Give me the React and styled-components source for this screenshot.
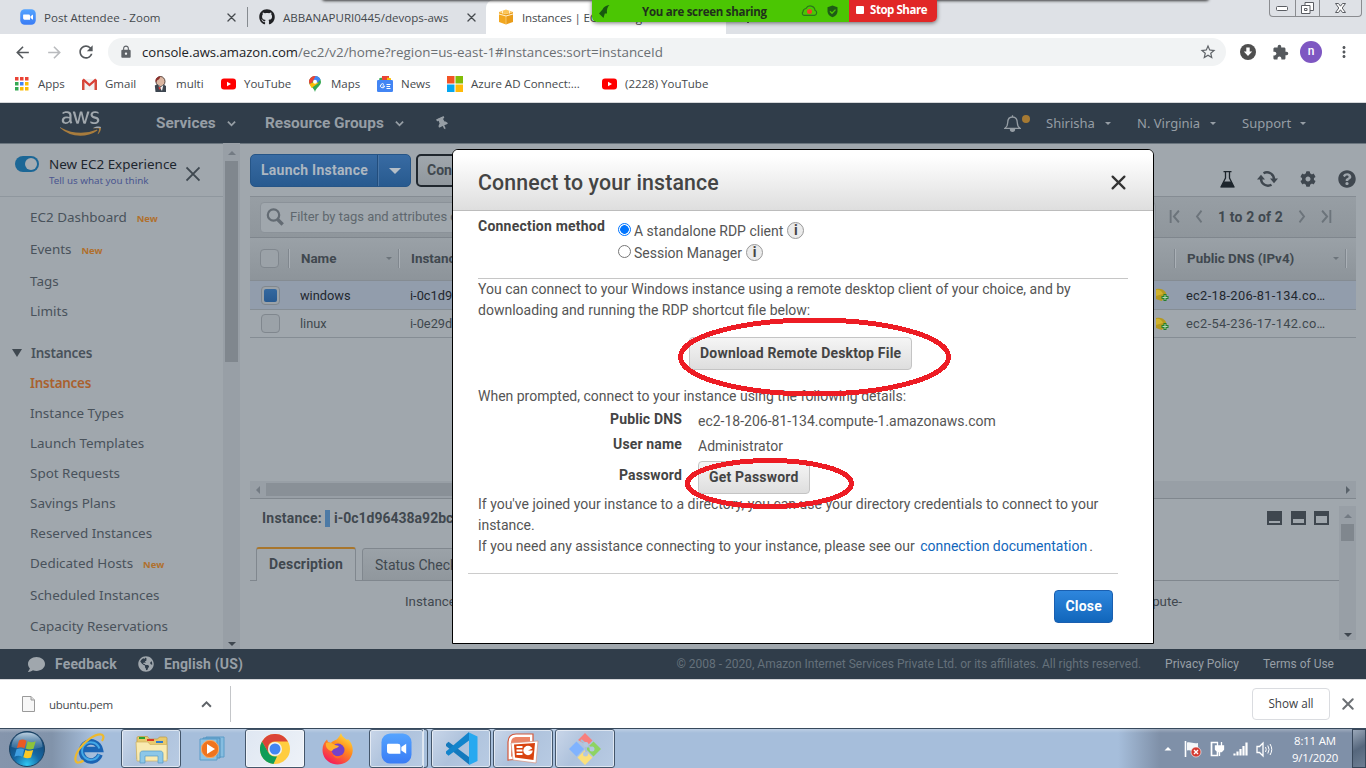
import React from "react";
import styled, { createGlobalStyle, css } from "styled-components";
import { FaAws, FaGithub, FaThumbtack, FaCog, FaQuestionCircle, FaComment, FaGlobeAmericas } from "react-icons/fa";
import { MdArrowBack, MdArrowForward, MdRefresh, MdLock, MdStarBorder, MdExtension, MdMoreVert } from "react-icons/md";

const ui = `"Open Sans", "Noto Sans", sans-serif`;
const ember = `"Noto Sans", "Open Sans", sans-serif`;
const roboto = `Roboto, "Liberation Sans", sans-serif`;

const GlobalStyle = createGlobalStyle`
  * { box-sizing: border-box; }
  html, body { margin: 0; padding: 0; overflow: hidden; }
  svg { display: block; flex: none; }
`;

const Screen = styled.div`
  position: relative;
  width: 1366px;
  height: 768px;
  display: flex;
  flex-direction: column;
  overflow: hidden;
  background: #fff;
  font-family: ${ui};
`;

/* text runs */
const Text = styled.span`
  white-space: nowrap;
  letter-spacing: ${(p) => p.$track || "inherit"};
`;

/* ---------- browser chrome ---------- */
const TabStrip = styled.div`
  flex: none;
  display: flex;
  height: 34px;
  background: #dee1e6;
`;
const Tab = styled.div`
  flex: none;
  display: flex;
  align-items: center;
  width: ${(p) => p.$width}px;
  padding-left: ${(p) => p.$pad}px;
  gap: 8px;
  font-size: 11.55px;
  letter-spacing: ${(p) => (p.$active ? "-0.15px" : "0")};
  color: #45494d;
  background: ${(p) => (p.$active ? "#fff" : "transparent")};
  border-radius: ${(p) => (p.$active ? "8px 8px 0 0" : "0")};
  ${(p) => p.$divider && css`
    background: linear-gradient(#868b90, #868b90) right center / 1px 20px no-repeat;
  `}
`;
const TabTitle = styled.span`
  flex: none;
  width: ${(p) => p.$width}px;
  white-space: nowrap;
`;
const NewTab = styled.div`
  display: flex;
  align-items: center;
  width: 44px;
  padding-left: 16px;
`;
const WindowButtons = styled.div`
  display: flex;
  margin-left: auto;
  margin-right: 4px;
  width: 93px;
  height: 17px;
  border: 1px solid #8a8c90;
  border-top: 0;
  border-radius: 0 0 4px 4px;
`;
const WindowButton = styled.div`
  display: flex;
  align-items: center;
  justify-content: center;
  width: ${(p) => p.$width}px;
  border-left: ${(p) => (p.$first ? "0" : "1px solid #8a8c90")};
`;
const TopShadow = styled.div`
  position: absolute;
  top: -6px;
  left: 322px;
  width: 887px;
  height: 6px;
  border-radius: 5px;
  box-shadow: 0 1px 3px rgba(0, 0, 0, 0.75);
`;
const ShareBanner = styled.div`
  position: absolute;
  left: 592px;
  top: 0;
  display: flex;
  height: 22px;
  border-radius: 0 0 5px 5px;
  overflow: hidden;
  box-shadow: 0 1px 4px rgba(0, 0, 0, 0.55);
`;
const Sharing = styled.div`
  display: flex;
  align-items: center;
  width: 257px;
  padding-left: 7px;
  background: #4bc603;
  color: #20301c;
  font-weight: 700;
  font-size: 11.5px;
  letter-spacing: -0.27px;
`;
const StopShare = styled.div`
  display: flex;
  align-items: center;
  width: 88px;
  padding: 0 0 3px 7px;
  gap: 6px;
  background: #e12727;
  color: #fff;
  font-weight: 700;
  font-size: 11.5px;
  letter-spacing: -0.45px;
`;
const Square = styled.i`
  width: 8px;
  height: 8px;
  border-radius: 1px;
  background: #fff;
`;
const Toolbar = styled.div`
  flex: none;
  display: flex;
  align-items: center;
  height: 36px;
  padding-left: 13px;
  color: #5f6368;
`;
const NavIcon = styled.div`
  display: flex;
  justify-content: center;
  width: ${(p) => p.$width || 32}px;
  color: ${(p) => p.$color || "#55595d"};
`;
const Omnibox = styled.div`
  display: flex;
  align-items: center;
  width: 1118px;
  height: 28px;
  padding: 0 9px 0 11px;
  margin: 0 10px 0 0;
  border-radius: 14px;
  background: #f1f3f4;
  font-size: 13.1px;
  color: #6b6f73;
`;
const Host = styled.b`
  font-weight: 400;
  color: #202124;
  margin-left: 9px;
`;
const Path = styled.span`
  font-size: 13.4px;
  flex: 1;
`;
const Avatar = styled.div`
  width: 22px;
  height: 22px;
  border-radius: 50%;
  background: #7e57c2;
  color: #fff;
  font: 500 12px/21px ${roboto};
  text-align: center;
`;
const Bookmarks = styled.div`
  flex: none;
  display: flex;
  align-items: center;
  height: 33px;
  padding: 0 0 5px 14px;
  border-bottom: 1px solid #d5d7da;
  font-size: 11.5px;
  color: #45494d;
`;
const Bookmark = styled.div`
  display: flex;
  align-items: center;
  width: ${(p) => p.$width}px;
  gap: 8px;
  white-space: nowrap;
`;
const IconSlot = styled.span`
  display: flex;
  justify-content: center;
  width: 16px;
  flex: none;
`;

/* ---------- console navigation ---------- */
const ConsoleNav = styled.div`
  flex: none;
  display: flex;
  align-items: center;
  height: 40px;
  padding-left: 60px;
  background: #303d4a;
  color: #969ea5;
  font: 700 15.4px ${roboto};
`;
const AwsLogo = styled.div`
  display: grid;
  width: 96px;
  > svg { grid-area: 1 / 1; }
  > svg:first-child { color: #a0a7ad; clip-path: inset(0 0 38% 0); }
  > svg:last-child { color: #a87c3d; clip-path: inset(62% 0 0 0); }
`;
const NavItem = styled.div`
  display: flex;
  align-items: center;
  justify-content: ${(p) => (p.$spread ? "space-between" : "flex-start")};
  width: ${(p) => p.$width}px;
  margin-right: ${(p) => p.$after || 0}px;
  white-space: nowrap;
  ${(p) => p.$light && css`font: 400 13px ${ember};`}
`;
const Pin = styled(FaThumbtack)`
  transform: rotate(-25deg);
`;
const Dot = styled.i`
  width: 8px;
  height: 8px;
  border-radius: 50%;
  margin: -8px 16px 0 1px;
  background: #a67a33;
`;

/* ---------- console body ---------- */
const Console = styled.div`
  flex: none;
  display: flex;
  height: 506px;
  background: #a0a7ad;
  box-shadow: inset 0 1px #6a757e;
`;
const Sidebar = styled.div`
  width: 223px;
  font-family: ${ember};
  color: #49525b;
`;
const Experience = styled.div`
  display: flex;
  height: 54px;
  padding: 13px 0 0 15px;
  margin-bottom: 4px;
  border-bottom: 1px solid #8f979e;
`;
const Toggle = styled.div`
  display: flex;
  justify-content: flex-end;
  width: 24px;
  height: 16px;
  padding: 2px 2px;
  border-radius: 8px;
  background: #1c6796;
  &::after {
    content: "";
    width: 12px;
    height: 12px;
    border-radius: 50%;
    background: #a5acb2;
  }
`;
const ExperienceText = styled.div`
  display: flex;
  flex-direction: column;
  width: 128px;
  margin: -2px 8px 0 10px;
  font-size: 13.43px;
  line-height: 20px;
  color: #1d262e;
  small { font-size: 9.8px; line-height: 13px; color: #4a5690; white-space: nowrap; }
`;
const SideItem = styled.div`
  display: flex;
  align-items: center;
  height: ${(p) => p.$height}px;
  margin-top: ${(p) => (p.$head ? 11 : 0)}px;
  padding-left: ${(p) => (p.$head ? 12 : 30)}px;
  font-size: 13.45px;
  font-weight: ${(p) => (p.$strong ? 600 : 400)};
  letter-spacing: ${(p) => (p.$strong ? "-0.25px" : "0")};
  color: ${(p) => (p.$current ? "#a9612f" : "inherit")};
`;
const NewTag = styled.em`
  margin: 3px 0 0 10px;
  font: 700 9.4px ${ember};
  color: #b0702d;
`;
const ScrollColumn = styled.div`
  display: flex;
  flex-direction: column;
  align-items: center;
  width: 17px;
  height: ${(p) => p.$height || "auto"};
  margin-top: ${(p) => p.$offset || 0}px;
  padding: 8px 0 3px;
  background: #989fa6;
`;
const Arrow = styled.i`
  width: 0;
  height: 0;
  border: ${(p) => p.$s || 4}px solid transparent;
  ${(p) => p.$dir === "up" && css`border-top: 0; border-bottom-color: ${p.$c};`}
  ${(p) => p.$dir === "down" && css`border-bottom: 0; border-top-color: ${p.$c};`}
  ${(p) => p.$dir === "left" && css`border-left: 0; border-right-color: ${p.$c};`}
  ${(p) => p.$dir === "right" && css`border-right: 0; border-left-color: ${p.$c};`}
`;
const Thumb = styled.div`
  width: 13px;
  height: ${(p) => p.$height}px;
  margin: 6px 0 auto;
  background: #80878e;
`;
const Main = styled.div`
  display: flex;
  flex-direction: column;
  width: 1106px;
  margin-left: 10px;
  font-family: ${roboto};
  color: #40484f;
`;
const Actions = styled.div`
  display: flex;
  align-items: flex-start;
  height: 53px;
  padding-top: 11px;
`;
const LaunchButton = styled.div`
  display: flex;
  width: 161px;
  height: 33px;
  border: 1px solid #265587;
  border-radius: 5px;
  background: linear-gradient(#386ba3, #285a8f);
  color: #adb7c1;
  font: 700 14px/31px ${roboto};
  letter-spacing: 0.24px;
`;
const LaunchLabel = styled.span`
  width: 127px;
  padding-left: 10px;
  border-right: 1px solid #224d7c;
`;
const LaunchMore = styled.span`
  flex: 1;
  display: flex;
  align-items: center;
  justify-content: center;
  border-left: 1px solid #4a76a6;
`;
const ConnectButton = styled.div`
  width: 92px;
  height: 33px;
  margin-left: 5px;
  padding-left: 9px;
  border: 2px solid #20272e;
  border-radius: 5px;
  background: linear-gradient(#a0a7ad, #90979d);
  font: 700 14px/29px ${roboto};
`;
const ActionIcons = styled.div`
  display: flex;
  align-items: center;
  margin-left: auto;
  height: 50px;
  gap: 22px;
`;
const FilterBar = styled.div`
  display: flex;
  align-items: center;
  height: 41px;
  padding-left: 10px;
  border-top: 1px solid #858c93;
  background: linear-gradient(#979ea4, #8f969c);
`;
const FilterInput = styled.div`
  display: flex;
  align-items: center;
  width: 896px;
  height: 31px;
  padding: 0 6px 1px 5px;
  border: 1px solid #8b9299;
  border-radius: 4px;
  background: #a0a7ad;
  font-size: 13px;
  letter-spacing: -0.02px;
  color: #5f676e;
  gap: 6px;
`;
const Pager = styled.div`
  display: flex;
  align-items: center;
  width: 163px;
  margin: 0 0 1px 13px;
  justify-content: space-between;
  font: 700 14px ${roboto};
  letter-spacing: 0.15px;
`;
const Cells = styled.div`
  display: grid;
  grid-template-columns: 39px 110px 746px 30px 171px 1fr;
  align-items: center;
`;
const HeadRow = styled(Cells)`
  height: 44px;
  padding-bottom: 1px;
  border-top: 1px solid #7f868d;
  border-bottom: 1px solid #858c93;
  background: linear-gradient(#9aa1a7, #8d949a);
  font-weight: 700;
  font-size: 13.4px;
`;
const HeadCell = styled.div`
  display: flex;
  align-items: center;
  justify-content: space-between;
  height: 19px;
  padding: 0 7px 0 11px;
  border-left: 1px solid #aab0b6;
  box-shadow: -1px 0 #80878e;
`;
const Row = styled(Cells)`
  height: ${(p) => (p.$selected ? 29 : 28)}px;
  border-bottom: 1px solid #858d94;
  background: ${(p) => (p.$selected ? "#929dac" : "transparent")};
  color: ${(p) => (p.$selected ? "#1f272e" : "#3f474e")};
  font-size: 12.8px;
`;
const Cell = styled.div`
  padding-left: 11px;
  white-space: nowrap;
  letter-spacing: ${(p) => p.$track || 0}px;
`;
const Check = styled.div`
  width: 19px;
  height: 19px;
  margin-left: ${(p) => p.$inset}px;
  padding: 2px;
  border: 1px solid #80878e;
  border-radius: 4px;
  background: #9ba2a8;
  &::after {
    content: "";
    display: ${(p) => (p.$on ? "block" : "none")};
    height: 13px;
    border-radius: 2px;
    background: linear-gradient(#34689f, #285a91);
  }
`;
const HScroll = styled.div`
  display: flex;
  align-items: center;
  height: 18px;
  margin-top: auto;
  padding: 0 6px;
  background: #989fa6;
  border-bottom: 1px solid #80878e;
`;
const HThumb = styled.div`
  width: 520px;
  height: 13px;
  margin: 0 auto 0 6px;
  background: #899097;
`;
const Detail = styled.div`
  display: flex;
  height: 150px;
`;
const DetailMain = styled.div`
  width: 1089px;
`;
const DetailHead = styled.div`
  display: flex;
  align-items: center;
  height: 38px;
  padding: 0 10px 0 12px;
  font-weight: 700;
  font-size: 14px;
`;
const Flag = styled.i`
  width: 5px;
  height: 17px;
  margin: 0 4px 0 3px;
  background: #4c7aa6;
`;
const PaneIcons = styled.div`
  display: flex;
  gap: 8.5px;
  margin-left: auto;
`;
const PaneIcon = styled.i`
  width: 15px;
  height: 14px;
  border: 2px solid #3f474f;
  border-top-width: ${(p) => p.$top}px;
`;
const DetailTabs = styled.div`
  display: flex;
  align-items: flex-end;
  height: 44px;
  padding-left: 6px;
  background: linear-gradient(#80878e, #80878e) bottom / 100% 1px no-repeat;
`;
const DetailTab = styled.div`
  width: ${(p) => p.$width}px;
  height: ${(p) => (p.$active ? 34 : 33)}px;
  margin-right: 6px;
  padding-left: 12px;
  border: 1px solid #80878e;
  border-radius: 3px 3px 0 0;
  line-height: 32px;
  font-size: 14px;
  background: linear-gradient(#9ba2a8, #90979d);
  ${(p) => p.$active && css`
    border-top: 2px solid #a8762d;
    border-bottom: 0;
    background: #a0a7ad;
    font-weight: 700;
    line-height: 31px;
    letter-spacing: 0.18px;
  `}
`;
const DetailBody = styled.div`
  display: flex;
  justify-content: space-between;
  padding: 13px 157px 0 155px;
  font-size: 13.3px;
`;

/* ---------- dialog ---------- */
const Dialog = styled.div`
  position: absolute;
  left: 452px;
  top: 149px;
  width: 702px;
  height: 495px;
  border: 1px solid #000;
  border-radius: 6px 6px 0 0;
  overflow: hidden;
  background: #fff;
  font: 400 14px/21px ${roboto};
  color: #555;
`;
const DialogHead = styled.div`
  display: flex;
  align-items: center;
  justify-content: space-between;
  height: 61px;
  padding: 5px 27px 0 25px;
  border-bottom: 1px solid #bcbcbc;
  background: linear-gradient(#fff 10%, #dedede);
  font-weight: 500;
  font-size: 21.3px;
  letter-spacing: 0.16px;
  color: #444;
`;
const Method = styled.div`
  display: flex;
  margin: 0 25px;
  height: 68px;
  border-bottom: 1px solid #c6c6c6;
`;
const MethodLabel = styled.div`
  width: 139px;
  padding-top: 5px;
  font-weight: 700;
  letter-spacing: 0.22px;
  color: #444;
`;
const Options = styled.div`
  padding-top: 9px;
`;
const Option = styled.div`
  display: flex;
  align-items: center;
  height: 22px;
  gap: 4px;
`;
const Radio = styled.i`
  width: 13px;
  height: 13px;
  margin: 0 -1px 3px 1px;
  border: 1px solid ${(p) => (p.$on ? "#0075ff" : "#767676")};
  border-radius: 50%;
  background: ${(p) => (p.$on ? "radial-gradient(circle, #0075ff 4px, #fff 4.6px)" : "#fff")};
`;
const Info = styled.i`
  width: 17px;
  height: 17px;
  margin-bottom: 1px;
  border: 1px solid #999;
  border-radius: 50%;
  background: #ebebeb;
  font: 700 14px/15px ${roboto};
  text-align: center;
  color: #444;
`;
const Copy = styled.p`
  margin: 0 25px;
  padding-right: ${(p) => p.$right || 0}px;
`;
const Button = styled.span`
  display: inline-block;
  height: 33px;
  padding: 0 10px;
  border: 1px solid ${(p) => (p.$primary ? "#1a5fb0" : "#c4c4c4")};
  border-radius: 4px;
  background: ${(p) => (p.$primary ? "linear-gradient(#2e86dd, #1166bb)" : "linear-gradient(#f5f5f5, #dedede)")};
  color: ${(p) => (p.$primary ? "#fff" : "#444")};
  font-weight: 700;
  line-height: 31px;
  letter-spacing: 0.2px;
  white-space: nowrap;
`;
const Download = styled.div`
  height: 65px;
  padding: 16px 0 0 236px;
`;
const Field = styled.div`
  display: flex;
  height: ${(p) => p.$height}px;
`;
const FieldLabel = styled.div`
  width: 229px;
  margin-right: 16px;
  padding-top: ${(p) => p.$top}px;
  text-align: right;
  font-weight: 700;
  letter-spacing: 0.15px;
  color: #444;
`;
const FieldValue = styled.div`
  padding-top: 4px;
`;
const DocLink = styled.span`
  margin: 0 2px;
  color: #1166bb;
`;
const DialogFoot = styled.div`
  display: flex;
  justify-content: flex-end;
  margin: 16px 35px 0 15px;
  padding: 16px 5px 0 0;
  border-top: 1px solid #ccc;
`;
const Marks = styled.svg`
  position: absolute;
  left: 670px;
  top: 310px;
`;

/* ---------- footer, downloads ---------- */
const Footer = styled.div`
  flex: none;
  display: flex;
  align-items: center;
  height: 30px;
  padding: 0 32px 0 28px;
  background: #303d4a;
  color: #979fa6;
  font: 400 12px ${roboto};
  white-space: nowrap;
  b { font-size: 14px; letter-spacing: 0.15px; margin: 0 21px 1px 10px; }
  small { font-size: 12px; margin-left: auto; color: #65717b; }
  span { margin-left: 24px; }
`;
const Downloads = styled.div`
  flex: none;
  display: flex;
  align-items: center;
  height: 49px;
  padding: 0 12px 0 0;
  border-top: 1px solid #d5d7da;
  font-size: 11.5px;
  color: #45494d;
`;
const DownloadItem = styled.div`
  display: flex;
  align-items: center;
  justify-content: space-between;
  width: 231px;
  height: 36px;
  padding: 0 18px 0 22px;
  border-right: 1px solid #c4c6c9;
`;
const FileName = styled.div`
  display: flex;
  align-items: center;
  gap: 14px;
`;
const ShowAll = styled.div`
  width: 78px;
  height: 32px;
  margin: 0 12px 0 auto;
  border: 1px solid #dadce0;
  border-radius: 4px;
  text-align: center;
  line-height: 29px;
  font-size: 11.7px;
  color: #3c4043;
`;

/* ---------- task bar ---------- */
const Taskbar = styled.div`
  flex: none;
  display: flex;
  height: 40px;
  border-top: 1px solid #37495c;
  background:
    linear-gradient(rgba(255, 255, 255, 0.25), transparent 4px),
    linear-gradient(90deg, #8595ac 0, #8193aa 52px, #a6bedb 92px, #a6bedb 1118px, #7f90a8 1160px);
`;
const TaskSlot = styled.div`
  display: flex;
  align-items: center;
  justify-content: center;
  width: ${(p) => p.$width || 60}px;
  height: 39px;
  margin-right: ${(p) => p.$after ?? 2}px;
  ${(p) => p.$open && css`
    border: 1px solid #44566b;
    border-radius: 3px;
    background: linear-gradient(125deg, ${p.$front ? "#dfe7f2, #eef2f8" : "#c9d6e9, #aec2dc 45%, #b8cbe3"});
    box-shadow: inset 0 0 0 1px rgba(255, 255, 255, 0.55);
  `}
`;
const Stacked = styled.i`
  width: 5px;
  height: 39px;
  margin: 0 3px 0 -1px;
  border: 1px solid #44566b;
  border-left-color: #dfe8f3;
  border-radius: 0 3px 3px 0;
`;
const Tray = styled.div`
  display: flex;
  align-items: center;
  margin-left: auto;
  color: #fff;
`;
const Clock = styled.div`
  width: 66px;
  margin: 0 4px 0 9px;
  text-align: center;
  font-size: 11.4px;
  line-height: 17px;
  letter-spacing: -0.15px;
`;
const PeekButton = styled.div`
  width: 14px;
  height: 39px;
  border: 1px solid #38475a;
  background: linear-gradient(150deg, #9aa7b8, #56677d 50%, #6d7e93);
`;

/* ---------- drawings ---------- */
const ZoomLogo = ({ s }) => (
  <svg width={s} height={s} viewBox="0 0 32 32">
    <defs><linearGradient id="zm" x2="0" y2="1"><stop stopColor="#55a4ff" /><stop offset="1" stopColor="#3a7cf5" /></linearGradient></defs>
    <rect x="0.5" y="0.5" width="31" height="31" rx="9" fill="url(#zm)" />
    <path d="M7 11h10.500a2.500 2.500 0 0 1 2.500 2.500V21.500H9a2.800 2.800 0 0 1-2.800-2.800V12zM21 14.500l5-3.500v10.500l-5-3.500z" fill="#fff" />
  </svg>
);
const Cube = () => (
  <svg width="16" height="16" viewBox="0 0 16 16">
    <path d="M1 3v10l7 2.500V5z" fill="#f2a71f" /><path d="M15 3v10l-7 2.500V5z" fill="#e99c19" />
    <path d="M1 3l7-2.500L15 3 8 5z" fill="#fbc457" />
    <path d="M1 5l7 2 7-2M4.500 2v2.500M11.500 2v2.500" fill="none" stroke="#fff0cf" strokeWidth="1" />
    <path d="M8 6v9" stroke="#fbdc9c" strokeWidth=".6" />
  </svg>
);
const AppsGrid = () => (
  <svg width="14" height="14" viewBox="0 0 14 14">
    {["#ea4335", "#ea4335", "#ea4335", "#34a853", "#4285f4", "#fbbc04", "#34a853", "#fbbc04", "#fbbc04"].map((c, i) => (
      <rect key={i} x={(i % 3) * 5} y={Math.floor(i / 3) * 5} width="3.500" height="3.500" fill={c} />
    ))}
  </svg>
);
const Gmail = () => (
  <svg width="15" height="12" viewBox="0 0 15 12">
    <path d="M1 1h13v11H1z" fill="#f2f2f2" /><path d="M0 1.500V12h2.500V3zM15 1.500V12h-2.500V3z" fill="#d54b3d" />
    <path d="M1 1.300l6.500 5.700L14 1.300" fill="none" stroke="#d93f35" strokeWidth="2.200" />
  </svg>
);
const Jenkins = () => (
  <svg width="13" height="16" viewBox="0 0 13 16">
    <ellipse cx="6.500" cy="5.500" rx="4.500" ry="5" fill="#dcb7a2" stroke="#4b3b36" strokeWidth=".9" />
    <path d="M1.800 6.500C.5 2 4 .3 7 .5c-2 1.500-1 3-3.500 3.500z" fill="#8c2f2b" /><path d="M.8 9.500c1.500-1 3-1 3-1L6.500 11l3-2.500 2.500 1.500v6H1.500z" fill="#3d4650" />
    <path d="M4 9l2.500 2.500L9.300 9 8 15z" fill="#f5f5f5" /><path d="M4.500 10.500l2.500 1.500-2 2z" fill="#d33833" />
  </svg>
);
const YouTube = () => (
  <svg width="15" height="12" viewBox="0 0 15 12"><rect y=".5" width="15" height="11" rx="3" fill="#f00" /><path d="M6 3.700v4.600L10 6z" fill="#fff" /></svg>
);
const MapsPin = () => (
  <svg width="12" height="16" viewBox="0 0 12 16">
    <path d="M6 0a6 6 0 0 1 6 6c0 4-4.800 5-6 10C4.800 11 0 10 0 6a6 6 0 0 1 6-6z" fill="#34a853" />
    <path d="M1.300 2.200A6 6 0 0 1 7.500.2L1.500 8.800A5 5 0 0 1 1.300 2.200z" fill="#ea4335" />
    <path d="M7.500 5l2 2L2.500 12 .5 8z" fill="#fbbc04" /><path d="M6.500 0a6 6 0 0 1 5 3.500L8 7 4.500 4z" fill="#4285f4" />
    <circle cx="6" cy="5.800" r="2" fill="#fff" />
  </svg>
);
const News = () => (
  <svg width="16" height="16" viewBox="0 0 16 16">
    <path d="M2.500 2l9-1 .5 4H2z" fill="#34a853" /><path d="M5 0h7v4H5z" fill="#ea4335" /><path d="M10 1.500l4 .8V6h-4z" fill="#fbbc04" />
    <rect y="4" width="16" height="12" rx="1.300" fill="#4285f4" />
    <path d="M7.500 10H5.500M7 8.500a2 2 0 1 0 .5 1.500M9.500 8.500h4M9.500 10.500h3.500M9.500 12.500h4" fill="none" stroke="#fff" strokeWidth="1" />
  </svg>
);
const Microsoft = () => (
  <svg width="16" height="16" viewBox="0 0 16 16">
    <path d="M0 0h7.500v7.500H0z" fill="#f35325" /><path d="M8.500 0H16v7.500H8.500z" fill="#81bc06" />
    <path d="M0 8.500h7.500V16H0z" fill="#05a6f0" /><path d="M8.500 8.500H16V16H8.500z" fill="#ffba08" />
  </svg>
);
const Chevron = ({ d = "down", w = 9, sw = 1.8, c = "currentColor", h }) => (
  <svg width={w} height={h || w} viewBox="0 0 10 10" fill="none" stroke={c} strokeWidth={sw} preserveAspectRatio="none">
    <path d={{ down: "M1 3l4 4 4-4", up: "M1 7l4-4 4 4", left: "M7.500 .5L3 5l4.500 4.500", right: "M2.500 .5L7 5 2.500 9.500", first: "M1.500 0v10M9 .5L4.500 5 9 9.500", last: "M8.500 0v10M1 .5L5.500 5 1 9.500" }[d]} />
  </svg>
);
const Cross = ({ s, sw = 2, c }) => (
  <svg width={s} height={s} viewBox="0 0 14 14" stroke={c} strokeWidth={sw} strokeLinecap="round"><path d="M1.500 1.500l11 11M12.500 1.500l-11 11" /></svg>
);
const Bell = () => (
  <svg width="17" height="17" viewBox="0 0 17 17" fill="none" stroke="#969ea5" strokeWidth="1.300">
    <path d="M1 13.300h15c-2-1.500-2.700-3-2.700-5.500C13.300 4 11.500 2 8.500 2S3.700 4 3.700 7.800c0 2.500-.7 4-2.700 5.500zM8.500 2V.3" /><path d="M6.500 14.500a2 1.800 0 0 0 4 0z" fill="#969ea5" />
  </svg>
);
const Search = () => (
  <svg width="18" height="18" viewBox="0 0 18 18" fill="none" stroke="#636b73"><circle cx="7.500" cy="7" r="5.700" strokeWidth="2.200" /><path d="M11.700 11.500l5 5" strokeWidth="3.300" /></svg>
);
const Sync = () => (
  <svg width="21" height="16" viewBox="0 0 21 16" fill="none" stroke="#3f474f" strokeWidth="2.400">
    <path d="M6.500 2.300A7 6.800 0 0 1 17 8M14.500 13.700A7 6.800 0 0 1 4 8" /><path d="M13 7.500h8l-4 4.700zM8 8.500H0l4-4.700z" fill="#3f474f" stroke="none" />
  </svg>
);
const Flask = () => (
  <svg width="15" height="17" viewBox="0 0 15 17">
    <path d="M3.500 .7h8M5.500 1v6L1.200 15.500h12.600L9.500 7V1" fill="none" stroke="#1d252c" strokeWidth="1.300" /><path d="M3.700 10.500h7.600l3.200 6H.5z" fill="#1d252c" />
  </svg>
);
const AlarmBell = () => (
  <svg width="13" height="14" viewBox="0 0 13 14">
    <path d="M0 1c4-1 8 0 10 4l.5 4-5 4L0 11z" fill="#b5991f" /><path d="M0 2c3-1 6 1 7 4l-7 2z" fill="#d0b32e" />
    <path d="M7.500 6h3v2h2v3h-2v2h-3v-2h-2V8h2z" fill="#24802d" /><path d="M9 7v5M6.500 9.500h5" stroke="#b5d6b5" strokeWidth="1" />
  </svg>
);
const FileIcon = () => (
  <svg width="13" height="16" viewBox="0 0 13 16"><path d="M.5.500h8.500l3.500 3.500v11.500H.500z" fill="#f7f7f7" stroke="#9a9a9a" /><path d="M9 .5V4h3.500" fill="#ddd" stroke="#9a9a9a" /></svg>
);
const StartOrb = () => (
  <svg width="38" height="38" viewBox="0 0 38 38">
    <defs>
      <radialGradient id="orb" cx=".5" cy=".95" r=".95"><stop stopColor="#2fc8f3" /><stop offset=".4" stopColor="#1668a4" /><stop offset="1" stopColor="#123c66" /></radialGradient>
      <linearGradient id="gloss" x2="0" y2="1"><stop stopColor="#d9e9f5" stopOpacity=".85" /><stop offset="1" stopColor="#8bb4d3" stopOpacity=".2" /></linearGradient>
    </defs>
    <circle cx="19" cy="19" r="17.500" fill="url(#orb)" stroke="#1c4363" />
    <path d="M3.500 17C3.500 8 10 2.500 19 2.500S34.500 8 34.500 17c-9 3-22 3-31 0z" fill="url(#gloss)" />
    <path d="M11 10.500c3-1.500 5-1 7.500.2l-2 7.500c-2.500-1.200-4.700-1.500-7.700-.2z" fill="#ea5a24" />
    <path d="M19.700 11.300c3 1.200 5 1.200 8-.1l-2.200 7.500c-2.700 1.200-5 1-7.700-.1z" fill="#8dc33b" />
    <path d="M8.500 19.200c3-1.300 5.200-.9 7.700.2l-2 7.300c-2.500-1.100-4.800-1.300-7.800 0z" fill="#3f9ee0" />
    <path d="M17.400 19.900c2.700 1.200 5 1.200 7.800.1L23 27.400c-2.700 1.100-5 .9-7.700-.2z" fill="#fbc926" />
  </svg>
);
const InternetExplorer = () => (
  <svg width="31" height="31" viewBox="0 0 31 31" fill="none">
    <path d="M26 21.500A9.500 9.500 0 1 1 26.300 16.500H9" stroke="#1b64b4" strokeWidth="5.600" />
    <path d="M25 21.500A8.800 8.800 0 1 1 25.300 15.500" stroke="#43a8e6" strokeWidth="2" />
    <path d="M4.500 29.500C1 30-.5 25 5 16.500S21 1 27 1.500c3 .3 3 3.500 1 6.500M4.500 29.500c1.500 0 3-.5 5-2" stroke="#edb92e" strokeWidth="2.200" />
  </svg>
);
const Explorer = () => (
  <svg width="33" height="30" viewBox="0 0 33 30">
    <path d="M2 4c0-1 .5-1.500 1.500-1.500h9l2 2.500h8l2-2h6c1 0 1.500.5 1.500 1.500V25H2z" fill="#e9ca6c" stroke="#b99843" strokeWidth=".7" />
    <path d="M4 3h6v2H4z" fill="#2aa12f" /><path d="M12 5h7v2h-7z" fill="#dd3726" /><path d="M21 7h7v2h-7z" fill="#2e7bd0" />
    <path d="M1 8h12l2 2.500h17V27H2z" fill="#f9eab0" stroke="#cdb05e" strokeWidth=".7" />
    <path d="M5 29v-9c0-2 1-3 3-3h17c2 0 3 1 3 3v9h-5v-7H10v7z" fill="#8cc7e8" stroke="#5599c4" strokeWidth=".7" />
  </svg>
);
const MediaPlayer = () => (
  <svg width="28" height="27" viewBox="0 0 28 27">
    <path d="M7 2h18v20H7z" fill="#86bde0" stroke="#5b9cc8" /><path d="M4 3h17v20H4z" fill="#73b2dc" stroke="#518fba" /><path d="M1 4h17v21H1z" fill="#8ec3e4" stroke="#5b9cc8" />
    <circle cx="11" cy="14" r="8.700" fill="#f0741e" stroke="#f8ac66" /><path d="M8 9v10l8-5z" fill="#fff" />
  </svg>
);
const Chrome = () => (
  <svg width="30" height="30" viewBox="0 0 30 30">
    <circle cx="15" cy="15" r="15" fill="#ffcd40" /><path d="M2 7.500A15 15 0 0 1 28 7.500H15a7.500 7.500 0 0 0-6.500 3.700L8.500 19z" fill="#db4437" />
    <path d="M2 7.500l6.500 11.200A7.500 7.500 0 0 0 15 22.500h2L13.500 30A15 15 0 0 1 2 7.500z" fill="#0f9d58" />
    <circle cx="15" cy="15" r="7" fill="#f1f1f1" /><circle cx="15" cy="15" r="5.500" fill="#4285f4" />
  </svg>
);
const Firefox = () => (
  <svg width="31" height="32" viewBox="0 0 31 32">
    <defs><linearGradient id="ff" x1=".9" y1="0" x2=".3" y2="1"><stop stopColor="#fff04a" /><stop offset=".45" stopColor="#ff8e1c" /><stop offset="1" stopColor="#f5185c" /></linearGradient></defs>
    <path d="M19 0c1 4 4 5 6 7l1-1c3 3 5 7 4.700 12C30 26 24 31.500 15.500 31.500S.5 25 .5 17c0-5 2-8 4.500-10.500L6 9l3 1c2-3 5-2 7-5 1-1 2-3 3-5z" fill="url(#ff)" />
    <circle cx="16" cy="17" r="6.500" fill="#7442c9" /><path d="M4 10c4-1 6 0 9 2l4 1c-1 2-4 2-5 3-1 0-1 2-3 2-3-1-6-4-5-8z" fill="#ffb02b" /><path d="M10 20c2 4 8 4 11 1-2 6-9 6-11-1z" fill="#ff6a25" />
  </svg>
);
const VSCode = () => (
  <svg width="33" height="33" viewBox="0 0 33 33">
    <path d="M1 12l2.500-2.300L24 25v7.500L1 14z" fill="#1479bd" /><path d="M1 21.500l2.500 2.300L24 8.500V0L1 19.500z" fill="#1284cc" />
    <path d="M24 .5l8.500 4v24.500l-8.500 4z" fill="#27a9f0" />
  </svg>
);
const PowerPoint = () => (
  <svg width="32" height="31" viewBox="0 0 32 31">
    <path d="M1 27V9c0-5 3-8 8-8h17v24z" fill="#fff" stroke="#d4583a" strokeWidth="1.200" /><path d="M4 24V10c0-4 2-6 6-6h13v6z" fill="#ec8465" />
    <path d="M4 10l27-2-2 22-23-3z" fill="#fff" stroke="#d7917c" strokeWidth=".7" /><path d="M7 11.500l21-1.500-1.500 17L8 24.500z" fill="#d9430f" />
    <path d="M9.500 14h6M9.500 17.500h6M9.500 21h6" stroke="#fff" strokeWidth="1.800" /><circle cx="21" cy="17.500" r="4.700" fill="#fff" /><path d="M21 17.500h5.500v-2.500z" fill="#d9430f" />
  </svg>
);
const GitLogo = () => (
  <svg width="34" height="34" viewBox="0 0 34 34">
    <path d="M17 1l7.500 7.500-4 4A4.500 4.500 0 0 0 15 11l-5-3z" fill="#f87f7d" /><path d="M8.500 9.500L16 17l-7.500 7.500L1 17z" fill="#80b3ff" />
    <path d="M25.500 9.500L33 17l-7.500 7.500L18 17z" fill="#8ed361" /><path d="M17 18l7.500 7.500L17 33l-7.500-7.500z" fill="#fbe07c" />
    <path d="M13 8l6 5M18 12v10M19 13l5 4" stroke="#a9bed8" strokeWidth="2" /><circle cx="18" cy="12.500" r="2.500" fill="#b4c7e0" /><circle cx="17.500" cy="22" r="2.500" fill="#b4c7e0" /><circle cx="24" cy="17" r="2.500" fill="#b4c7e0" />
  </svg>
);
const TrayIcons = () => (
  <svg width="110" height="20" viewBox="0 0 110 20">
    <path d="M1.500 11.500L5 8l3.500 3.500z" fill="#fff" />
    <path d="M22.500 2v16" stroke="#fff" strokeWidth="1.600" /><path d="M24 3.500c4-1 6 1.500 11 .5v8c-4 1-7-1.500-11-.5z" fill="#f4f6f8" />
    <circle cx="33" cy="13" r="5" fill="#d53a30" stroke="#fff" strokeWidth=".6" /><path d="M31 11l4 4M35 11l-4 4" stroke="#fff" strokeWidth="1.400" />
    <path d="M55 3.500h-6.500v13h6V13" fill="none" stroke="#fff" strokeWidth="1.700" /><path d="M52.500 7h8v3.500l-2 2h-4l-2-2zM54.500 3v4M58.500 3v4M56.500 12v5" fill="#fff" stroke="#fff" strokeWidth="1.300" />
    <path d="M71.500 16.500v-2M74.500 16.500v-4M77.500 16.500v-6.500M80.500 16.500V7M83.500 16.500V3.500" stroke="#fff" strokeWidth="2.200" />
    <path d="M94 7.500h2.500L100 4v13l-3.500-3.500H94z" fill="none" stroke="#fff" strokeWidth="1.300" /><path d="M102.500 8q1.500 2.500 0 5M104.800 6.500q2.500 4 0 8M107 5q3.500 5.500 0 11" fill="none" stroke="#fff" strokeWidth="1" />
  </svg>
);

const sideItems = [
  { t: "EC2 Dashboard", tag: 1, h: 32 }, { t: "Events", tag: 1, h: 32 }, { t: "Tags", h: 31 }, { t: "Limits", h: 30 },
  { t: "Instances", head: 1, h: 31 }, { t: "Instances", current: 1, h: 30 }, { t: "Instance Types", h: 30 }, { t: "Launch Templates", h: 30 },
  { t: "Spot Requests", h: 30 }, { t: "Savings Plans", h: 30 }, { t: "Reserved Instances", h: 30 }, { t: "Dedicated Hosts", tag: 1, h: 30 },
  { t: "Scheduled Instances", h: 33 }, { t: "Capacity Reservations", h: 29 },
];
const bookmarks = [
  { t: "Apps", w: 67, i: <AppsGrid /> }, { t: "Gmail", w: 71, i: <Gmail /> }, { t: "multi", w: 68, i: <Jenkins /> }, { t: "YouTube", w: 87, i: <YouTube /> },
  { t: "Maps", w: 70, i: <MapsPin /> }, { t: "News", w: 70, i: <News /> }, { t: "Azure AD Connect:...", w: 154, i: <Microsoft /> }, { t: "(2228) YouTube", w: 110, i: <YouTube /> },
];

export default function App() {
  return (
    <Screen>
      <GlobalStyle />
      <TabStrip>
        <Tab $width={248} $pad={20} $divider>
          <ZoomLogo s={16} />
          <TabTitle $width={175}>Post Attendee - Zoom</TabTitle>
          <Cross s={9} c="#45494d" />
        </Tab>
        <Tab $width={238} $pad={11}>
          <FaGithub size={16} color="#202124" />
          <TabTitle $width={176}>ABBANAPURI0445/devops-aws</TabTitle>
          <Cross s={9} c="#45494d" />
        </Tab>
        <Tab $width={240} $pad={12} $active>
          <Cube />
          <TabTitle $width={200}>Instances | EC2 Management Con</TabTitle>
        </Tab>
        <NewTab><svg width="12" height="12" viewBox="0 0 12 12" stroke="#45494d" strokeWidth="1.700"><path d="M6 0v12M0 6h12" /></svg></NewTab>
        <WindowButtons>
          <WindowButton $width={25} $first><svg width="12" height="5" viewBox="0 0 12 5"><rect x=".5" y=".5" width="11" height="4" rx="1" fill="#fff" stroke="#5a5d63" /></svg></WindowButton>
          <WindowButton $width={25}><svg width="13" height="12" viewBox="0 0 13 12" fill="#fff" stroke="#5a5d63"><path d="M4 .5h8.500v8H4z" /><path d="M.5 3.500h8.500v8H.5z" /><path d="M3.500 6.500h2.500v2H3.500z" /></svg></WindowButton>
          <WindowButton $width={42}><svg width="11" height="10" viewBox="0 0 11 10"><path d="M.5.500h3l2 2.700L7.500.500h3L7.200 5l3.300 4.500h-3L5.500 6.800 3.500 9.500h-3L3.800 5z" fill="#fff" stroke="#5a5d63" /></svg></WindowButton>
        </WindowButtons>
      </TabStrip>
      <Toolbar>
        <NavIcon $width={18}><MdArrowBack size={19} /></NavIcon>
        <NavIcon $width={46} $color="#b9bbbe"><MdArrowForward size={19} /></NavIcon>
        <NavIcon $width={18}><MdRefresh size={20} /></NavIcon>
        <NavIcon $width={13} />
        <Omnibox>
          <MdLock size={14} color="#5f6368" />
          <Host>console.aws.amazon.com</Host>
          <Path>/ec2/v2/home?region=us-east-1#Instances:sort=instanceId</Path>
          <MdStarBorder size={18} color="#5f6368" />
        </Omnibox>
        <NavIcon $width={24}>
          <svg width="16" height="16" viewBox="0 0 16 16"><circle cx="8" cy="8" r="8" fill="#4f4f4f" /><path d="M6.300 3.500h3.400v4h2.500L8 12 3.800 7.500h2.500z" fill="#fff" /></svg>
        </NavIcon>
        <NavIcon $width={40}><MdExtension size={17} /></NavIcon>
        <Avatar>n</Avatar>
        <NavIcon $width={43}><MdMoreVert size={18} /></NavIcon>
      </Toolbar>
      <Bookmarks>
        {bookmarks.map((b, n) => (
          <Bookmark key={n} $width={b.w}><IconSlot>{b.i}</IconSlot>{b.t}</Bookmark>
        ))}
      </Bookmarks>

      <ConsoleNav>
        <AwsLogo><FaAws size={41} /><FaAws size={41} /></AwsLogo>
        <NavItem $width={80} $after={29} $spread>Services<Chevron w={9} sw={2} /></NavItem>
        <NavItem $width={139} $after={32} $spread>Resource Groups<Chevron w={9} sw={2} /></NavItem>
        <NavItem $width={568}><Pin size={13} /></NavItem>
        <Bell />
        <Dot />
        <NavItem $light $width={65} $after={26} $spread>Shirisha<Arrow $dir="down" $c="#969ea5" $s={3.5} /></NavItem>
        <NavItem $light $width={79} $after={26} $spread>N. Virginia<Arrow $dir="down" $c="#969ea5" $s={3.5} /></NavItem>
        <NavItem $light $width={64} $spread>Support<Arrow $dir="down" $c="#969ea5" $s={3.5} /></NavItem>
      </ConsoleNav>

      <Console>
        <Sidebar>
          <Experience>
            <Toggle />
            <ExperienceText><Text>New EC2 Experience</Text><small>Tell us what you think</small></ExperienceText>
            <NavIcon $width={16}><svg width="14" height="36" viewBox="0 0 14 36" stroke="#3f4850" strokeWidth="1.800"><path d="M.5 11.500l13 13M13.500 11.500l-13 13" /></svg></NavIcon>
          </Experience>
          {sideItems.map((s, n) => (
            <SideItem key={n} $height={s.h} $current={s.current} $head={s.head} $strong={s.head || s.current}>
              {s.head && <svg width="19" height="8" viewBox="0 0 19 8"><path d="M0 0h10L5 8z" fill="#3f4850" /></svg>}
              <Text>{s.t}</Text>
              {s.tag && <NewTag>New</NewTag>}
            </SideItem>
          ))}
        </Sidebar>
        <ScrollColumn>
          <Arrow $dir="up" $c="#737b83" />
          <Thumb $height={201} />
          <Arrow $dir="down" $c="#3f474f" />
        </ScrollColumn>
        <Main>
          <Actions>
            <LaunchButton>
              <LaunchLabel>Launch Instance</LaunchLabel>
              <LaunchMore><Arrow $dir="down" $c="#b5bec7" $s={6} /></LaunchMore>
            </LaunchButton>
            <ConnectButton>Connect</ConnectButton>
            <ActionIcons>
              <Flask />
              <Sync />
              <FaCog size={16} color="#3f474f" />
              <FaQuestionCircle size={18} color="#3f474f" />
            </ActionIcons>
          </Actions>
          <FilterBar>
            <FilterInput><Search /><Text>Filter by tags and attributes or search by keyword</Text></FilterInput>
            <Pager>
              <Chevron d="first" w={11} h={13} sw={1.7} c="#6c747b" />
              <Chevron d="left" w={10} h={13} sw={1.7} c="#6c747b" />
              <Text>1 to 2 of 2</Text>
              <Chevron d="right" w={10} h={13} sw={1.7} c="#6c747b" />
              <Chevron d="last" w={11} h={13} sw={1.7} c="#6c747b" />
            </Pager>
          </FilterBar>
          <HeadRow>
            <Check $inset={10} />
            <HeadCell>Name<Arrow $dir="down" $c="#6c747b" $s={3.5} /></HeadCell>
            <HeadCell>Instance ID</HeadCell>
            <span />
            <HeadCell>Public DNS (IPv4)<Arrow $dir="down" $c="#6c747b" $s={3.5} /></HeadCell>
            <HeadCell />
          </HeadRow>
          <Row $selected>
            <Check $inset={11} $on />
            <Cell>windows</Cell>
            <Cell>i-0c1d96438a92bc</Cell>
            <Cell><AlarmBell /></Cell>
            <Cell $track={0.32}>ec2-18-206-81-134.co…</Cell>
          </Row>
          <Row>
            <Check $inset={11} />
            <Cell>linux</Cell>
            <Cell>i-0e29d</Cell>
            <Cell><AlarmBell /></Cell>
            <Cell $track={0.32}>ec2-54-236-17-142.co…</Cell>
          </Row>
          <HScroll>
            <Arrow $dir="left" $c="#737b83" />
            <HThumb />
            <Arrow $dir="right" $c="#59626a" />
          </HScroll>
          <Detail>
            <DetailMain>
              <DetailHead>
                <Text $track="0.22px">Instance:</Text><Flag />i-0c1d96438a92bc
                <PaneIcons><PaneIcon $top={10} /><PaneIcon $top={8} /><PaneIcon $top={5} /></PaneIcons>
              </DetailHead>
              <DetailTabs>
                <DetailTab $width={100} $active>Description</DetailTab>
                <DetailTab $width={110}>Status Checks</DetailTab>
              </DetailTabs>
              <DetailBody><span>Instance ID</span><span>compute-</span></DetailBody>
            </DetailMain>
            <ScrollColumn $height="134px" $offset={7}>
              <Arrow $dir="up" $c="#737b83" />
              <Thumb $height={17} />
              <Arrow $dir="down" $c="#3f474f" />
            </ScrollColumn>
          </Detail>
        </Main>
      </Console>

      <Footer>
        <FaComment size={17} color="#a0a7ad" /><b>Feedback</b>
        <FaGlobeAmericas size={16} color="#a0a7ad" /><b>English (US)</b>
        <small>© 2008 - 2020, Amazon Internet Services Private Ltd. or its affiliates. All rights reserved.</small>
        <span>Privacy Policy</span>
        <span>Terms of Use</span>
      </Footer>

      <Downloads>
        <DownloadItem>
          <FileName><FileIcon /><Text $track="-0.27px">ubuntu.pem</Text></FileName>
          <Chevron d="up" w={11} sw={1.8} c="#5f6368" />
        </DownloadItem>
        <ShowAll>Show all</ShowAll>
        <Cross s={12} sw={2.3} c="#6b6f73" />
      </Downloads>

      <Taskbar>
        <TaskSlot $width={54} $after={5}><StartOrb /></TaskSlot>
        <TaskSlot $width={61} $after={1}><InternetExplorer /></TaskSlot>
        <TaskSlot $open><Explorer /></TaskSlot>
        <TaskSlot><MediaPlayer /></TaskSlot>
        <TaskSlot $open $front><Chrome /></TaskSlot>
        <TaskSlot><Firefox /></TaskSlot>
        <TaskSlot $open $width={55} $after={0}><ZoomLogo s={31} /></TaskSlot>
        <Stacked />
        <TaskSlot $open><VSCode /></TaskSlot>
        <TaskSlot $open><PowerPoint /></TaskSlot>
        <TaskSlot $open><GitLogo /></TaskSlot>
        <Tray>
          <TrayIcons />
          <Clock>8:11 AM<br />9/1/2020</Clock>
          <PeekButton />
        </Tray>
      </Taskbar>

      <TopShadow />
      <ShareBanner>
        <Sharing>
          <svg width="43" height="13" viewBox="0 0 43 13"><path d="M0 8.500L3.500 4.500C4.500 2 7 .5 10.500 0 8.500 2 7.500 4.500 8 8.500H5.800L4.500 13z" fill="#17590f" /></svg>
          <Text>You are screen sharing</Text>
          <svg width="76" height="14" viewBox="0 0 76 14">
            <path d="M37 11.300h10.500a2.600 2.600 0 0 0 .5-5A4.800 4.800 0 0 0 39 4.500a3.500 3.500 0 0 0-3 3.300 2 2 0 0 0 1 3.500z" fill="none" stroke="#2a7a1a" strokeWidth="1.200" /><circle cx="42.500" cy="7.500" r="2.500" fill="#f0402c" />
            <path d="M65.500 1.500l5 1.800v4c0 3-2 4.700-5 6-3-1.300-5-3-5-6v-4z" fill="#1f5c16" /><path d="M63 7.300l2 2 3.500-3.700" fill="none" stroke="#4bc603" strokeWidth="1.300" />
          </svg>
        </Sharing>
        <StopShare><Square />Stop Share</StopShare>
      </ShareBanner>

      <Dialog>
        <DialogHead>Connect to your instance<Cross s={15} sw={2.1} c="#333" /></DialogHead>
        <Method>
          <MethodLabel>Connection method</MethodLabel>
          <Options>
            <Option><Radio $on />A standalone RDP client<Info>i</Info></Option>
            <Option><Radio />Session Manager<Info>i</Info></Option>
          </Options>
        </Method>
        <Copy $right={50}>You can connect to your Windows instance using a remote desktop client of your choice, and by downloading and running the RDP shortcut file below:</Copy>
        <Download><Button>Download Remote Desktop File</Button></Download>
        <Copy>When prompted, connect to your instance using the following details:</Copy>
        <Field $height={25}><FieldLabel $top={2}>Public DNS</FieldLabel><FieldValue>ec2-18-206-81-134.compute-1.amazonaws.com</FieldValue></Field>
        <Field $height={25}><FieldLabel $top={2}>User name</FieldLabel><FieldValue>Administrator</FieldValue></Field>
        <Field $height={37}><FieldLabel $top={8}>Password</FieldLabel><FieldValue><Button>Get Password</Button></FieldValue></Field>
        <Copy>If you've joined your instance to a directory, you can use your directory credentials to connect to your instance.</Copy>
        <Copy>If you need any assistance connecting to your instance, please see our <DocLink>connection documentation</DocLink>.</Copy>
        <DialogFoot><Button $primary>Close</Button></DialogFoot>
      </Dialog>

      <Marks width="290" height="210" viewBox="0 0 290 210" fill="none" stroke="#ed1c24" strokeWidth="5" shapeRendering="crispEdges">
        <ellipse cx="144.500" cy="47" rx="134" ry="37" />
        <ellipse cx="99.500" cy="173.500" rx="82" ry="23" />
      </Marks>
    </Screen>
  );
}
